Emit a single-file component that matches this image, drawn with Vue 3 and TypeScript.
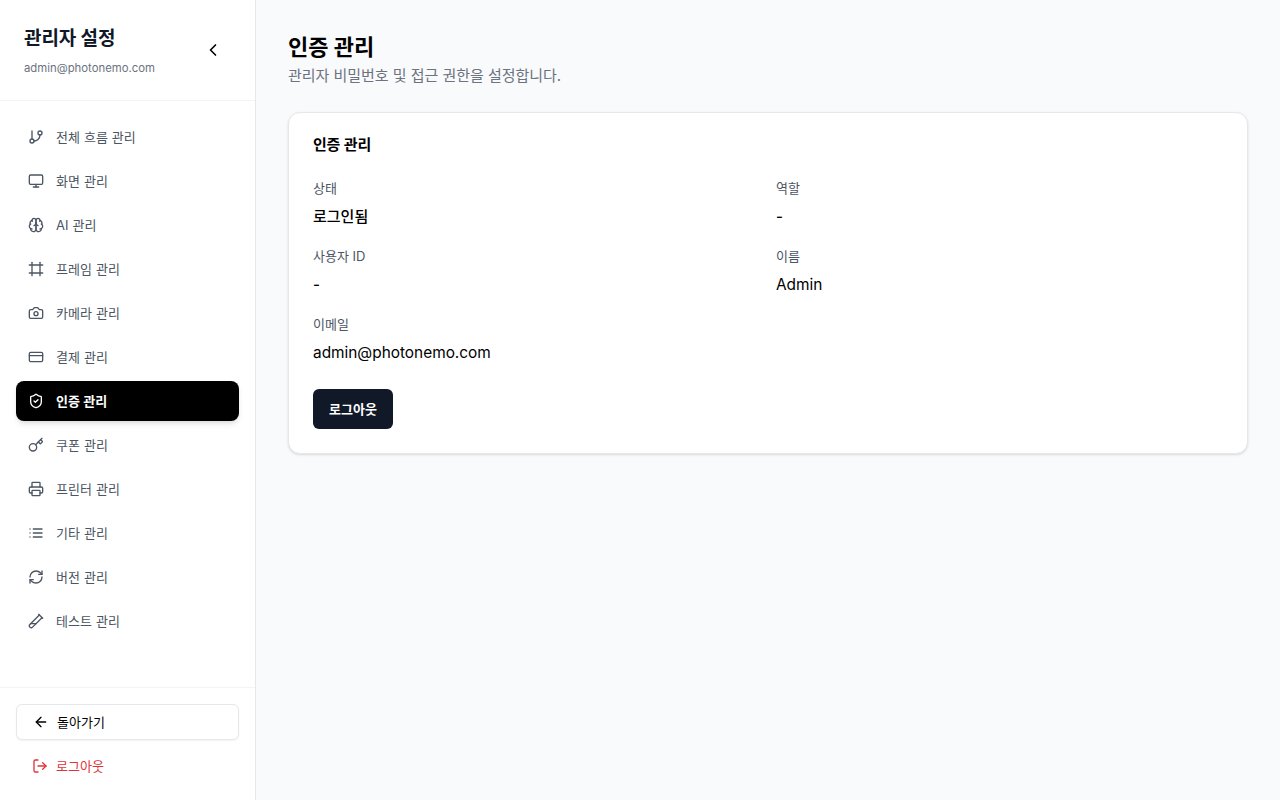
<script setup lang="ts">
interface NavItem {
  label: string
  paths: string[]
  active?: boolean
}

const navItems: NavItem[] = [
  { label: '전체 흐름 관리', paths: ['M6 3v12', 'M18 3a3 3 0 1 1 0 6 3 3 0 0 1 0-6z', 'M6 15a3 3 0 1 1 0 6 3 3 0 0 1 0-6z', 'M18 9a9 9 0 0 1-9 9'] },
  { label: '화면 관리', paths: ['M4 3h16a2 2 0 0 1 2 2v10a2 2 0 0 1-2 2H4a2 2 0 0 1-2-2V5a2 2 0 0 1 2-2z', 'M8 21h8', 'M12 17v4'] },
  { label: 'AI 관리', paths: ['M12 5a3 3 0 1 0-5.997.125 4 4 0 0 0-2.526 5.770 4 4 0 0 0 .556 6.588A4 4 0 1 0 12 18Z', 'M12 5a3 3 0 1 1 5.997.125 4 4 0 0 1 2.526 5.770 4 4 0 0 1-.556 6.588A4 4 0 1 1 12 18Z', 'M15 13a4.500 4.500 0 0 1-3-4 4.500 4.500 0 0 1-3 4', 'M17.599 6.500a3 3 0 0 0 .399-1.375', 'M6.003 5.125A3 3 0 0 0 6.401 6.500', 'M3.477 10.896a4 4 0 0 1 .585-.396', 'M19.938 10.500a4 4 0 0 1 .585.396', 'M6 18a4 4 0 0 1-1.967-.516', 'M19.967 17.484A4 4 0 0 1 18 18'] },
  { label: '프레임 관리', paths: ['M22 6H2', 'M22 18H2', 'M6 2v20', 'M18 2v20'] },
  { label: '카메라 관리', paths: ['M14.500 4h-5L7 7H4a2 2 0 0 0-2 2v9a2 2 0 0 0 2 2h16a2 2 0 0 0 2-2V9a2 2 0 0 0-2-2h-3l-2.500-3z', 'M12 10a3 3 0 1 0 0 6 3 3 0 0 0 0-6z'] },
  { label: '결제 관리', paths: ['M4 5h16a2 2 0 0 1 2 2v10a2 2 0 0 1-2 2H4a2 2 0 0 1-2-2V7a2 2 0 0 1 2-2z', 'M2 10h20'] },
  { label: '인증 관리', active: true, paths: ['M20 13c0 5-3.500 7.500-7.660 8.950a1 1 0 0 1-.670-.010C7.500 20.500 4 18 4 13V6a1 1 0 0 1 1-1c2 0 4.500-1.200 6.240-2.720a1.170 1.170 0 0 1 1.520 0C14.510 3.810 17 5 19 5a1 1 0 0 1 1 1z', 'm9 12 2 2 4-4'] },
  { label: '쿠폰 관리', paths: ['m15.500 7.500 2.300 2.300a1 1 0 0 0 1.400 0l2.100-2.100a1 1 0 0 0 0-1.400L19 4', 'm21 2-9.600 9.600', 'M7.500 10a5.500 5.500 0 1 0 0 11 5.500 5.500 0 0 0 0-11z'] },
  { label: '프린터 관리', paths: ['M6 18H4a2 2 0 0 1-2-2v-5a2 2 0 0 1 2-2h16a2 2 0 0 1 2 2v5a2 2 0 0 1-2 2h-2', 'M6 9V3a1 1 0 0 1 1-1h10a1 1 0 0 1 1 1v6', 'M7 14h10a1 1 0 0 1 1 1v6a1 1 0 0 1-1 1H7a1 1 0 0 1-1-1v-6a1 1 0 0 1 1-1z'] },
  { label: '기타 관리', paths: ['M3 6h.010', 'M3 12h.010', 'M3 18h.010', 'M8 6h13', 'M8 12h13', 'M8 18h13'] },
  { label: '버전 관리', paths: ['M3 12a9 9 0 0 1 9-9 9.750 9.750 0 0 1 6.740 2.740L21 8', 'M21 3v5h-5', 'M21 12a9 9 0 0 1-9 9 9.750 9.750 0 0 1-6.740-2.740L3 16', 'M8 16H3v5'] },
  { label: '테스트 관리', paths: ['M21 7 6.820 21.180a2.830 2.830 0 0 1-3.990-.010 2.830 2.830 0 0 1 0-4L17 3', 'm16 2 6 6', 'M12 16H4'] },
]
</script>

<template>
  <div class="layout">
    <aside class="sidebar">
      <header class="side-head">
        <div class="side-title">
          <h2>관리자 설정</h2>
          <p>admin@photonemo.com</p>
        </div>
        <button class="collapse" type="button" aria-label="접기">
          <svg viewBox="0 0 24 24" width="20" height="20" class="ico"><path d="m15 18-6-6 6-6" /></svg>
        </button>
      </header>
      <nav class="nav">
        <a v-for="item in navItems" :key="item.label" class="nav-item" :class="{ active: item.active }">
          <svg viewBox="0 0 24 24" width="16" height="16" class="ico">
            <path v-for="d in item.paths" :key="d" :d="d" />
          </svg>
          <span>{{ item.label }}</span>
        </a>
      </nav>
      <footer class="side-foot">
        <button class="back" type="button">
          <svg viewBox="0 0 24 24" width="16" height="16" class="ico"><path d="m12 19-7-7 7-7" /><path d="M19 12H5" /></svg>
          <span>돌아가기</span>
        </button>
        <button class="side-logout" type="button">
          <svg viewBox="0 0 24 24" width="16" height="16" class="ico"><path d="M9 21H5a2 2 0 0 1-2-2V5a2 2 0 0 1 2-2h4" /><path d="m16 17 5-5-5-5" /><path d="M21 12H9" /></svg>
          <span>로그아웃</span>
        </button>
      </footer>
    </aside>
    <main class="main">
      <h1>인증 관리</h1>
      <p class="sub">관리자 비밀번호 및 접근 권한을 설정합니다.</p>
      <section class="card">
        <h3>인증 관리</h3>
        <div class="grid">
          <div class="field"><label>상태</label><div class="value">로그인됨</div></div>
          <div class="field"><label>역할</label><div class="value">-</div></div>
          <div class="field"><label>사용자 ID</label><div class="value">-</div></div>
          <div class="field"><label>이름</label><div class="value latin">Admin</div></div>
          <div class="field"><label>이메일</label><div class="value latin">admin@photonemo.com</div></div>
        </div>
        <button class="logout" type="button">로그아웃</button>
      </section>
    </main>
  </div>
</template>

<style>
html, body { margin: 0; background: #f9fafb; }
</style>

<style scoped>
.layout {
  display: flex;
  height: 800px;
  width: 1280px;
  overflow: hidden;
  font-family: Inter, "Noto Sans CJK KR", sans-serif;
  background: #f9fafb;
  color: #000;
}
.ico {
  fill: none;
  stroke: currentColor;
  stroke-width: 2;
  stroke-linecap: round;
  stroke-linejoin: round;
  flex: none;
}
.sidebar {
  width: 256px;
  box-sizing: border-box;
  flex: none;
  display: flex;
  flex-direction: column;
  background: #fff;
  border-right: 1px solid #e5e7eb;
}
.side-head {
  height: 101px;
  box-sizing: border-box;
  border-bottom: 1px solid #f3f4f6;
  padding: 25px 24px 0;
  display: flex;
  justify-content: space-between;
}
.side-title h2 {
  margin: 0;
  font-size: 19px;
  line-height: 28px;
  font-weight: 700;
  letter-spacing: -0.1px;
  color: #111827;
}
.side-title p {
  margin: 7px 0 0;
  font-size: 11.35px;
  line-height: 16px;
  color: #6b7280;
}
.collapse {
  width: 32px;
  height: 32px;
  margin: 9px 2px 0 0;
  padding: 0;
  border: 0;
  background: none;
  color: #000;
  display: flex;
  align-items: center;
  justify-content: center;
}
.nav {
  flex: 1;
  padding: 16px;
  display: flex;
  flex-direction: column;
  gap: 4px;
}
.nav-item {
  height: 40px;
  box-sizing: border-box;
  padding: 0 12px;
  display: flex;
  align-items: center;
  gap: 12px;
  border-radius: 8px;
  font-size: 13px;
  font-weight: 400;
  letter-spacing: 0.1px;
  color: #4b5563;
}
.nav-item span {
  margin-bottom: 2px;
}
.nav-item.active {
  background: #000;
  color: #fff;
  font-weight: 700;
  box-shadow: 0 4px 6px -1px rgba(0, 0, 0, 0.1), 0 2px 4px -2px rgba(0, 0, 0, 0.1);
}
.side-foot {
  border-top: 1px solid #f3f4f6;
  padding: 16px;
  height: 113px;
  box-sizing: border-box;
  display: flex;
  flex-direction: column;
  gap: 6px;
}
.back {
  height: 36px;
  flex: none;
  box-sizing: border-box;
  border: 1px solid #e5e7eb;
  border-radius: 6px;
  background: #fff;
  box-shadow: 0 1px 2px rgba(0, 0, 0, 0.05);
  padding: 0 0 0 16px;
  display: flex;
  align-items: center;
  gap: 8px;
  font: 400 13px Inter, "Noto Sans CJK KR", sans-serif;
  color: #000;
}
.back span, .side-logout span {
  margin-bottom: 2px;
}
.side-logout {
  height: 40px;
  flex: none;
  border: 0;
  background: none;
  padding: 0 0 0 16px;
  display: flex;
  align-items: center;
  gap: 8px;
  font: 400 13px Inter, "Noto Sans CJK KR", sans-serif;
  color: #e0343c;
}
.main {
  flex: 1;
  padding: 32px;
  min-width: 0;
}
h1 {
  margin: 0;
  font-size: 22px;
  line-height: 30px;
  font-weight: 700;
  color: #000;
}
.sub {
  margin: 4px 0 26px;
  font-size: 15px;
  line-height: 20px;
  letter-spacing: -0.03px;
  color: #6b7280;
}
.card {
  box-sizing: border-box;
  height: 342px;
  background: #fff;
  border: 1px solid #e5e7eb;
  border-radius: 12px;
  box-shadow: 0 1px 3px rgba(0, 0, 0, 0.1), 0 1px 2px -1px rgba(0, 0, 0, 0.1);
  padding: 20px 24px 24px;
}
h3 {
  margin: 0 0 20px;
  font-size: 15px;
  line-height: 24px;
  font-weight: 600;
  letter-spacing: -0.2px;
  color: #000;
}
.grid {
  display: grid;
  grid-template-columns: 1fr 1fr;
  column-gap: 16px;
  row-gap: 12px;
}
.field label {
  display: block;
  padding-top: 1px;
  font-size: 13px;
  line-height: 20px;
  color: #4b5563;
}
.value {
  margin-top: 3px;
  font-size: 15px;
  line-height: 32px;
  font-weight: 500;
  color: #000;
}
.value.latin {
  font-size: 15.4px;
  font-weight: 400;
}
.logout {
  display: block;
  margin-top: 20px;
  width: 80px;
  height: 40px;
  border: 0;
  border-radius: 6px;
  background: #111827;
  color: #fff;
  padding: 0 0 2px;
  font: 600 13px Inter, "Noto Sans CJK KR", sans-serif;
}
</style>
